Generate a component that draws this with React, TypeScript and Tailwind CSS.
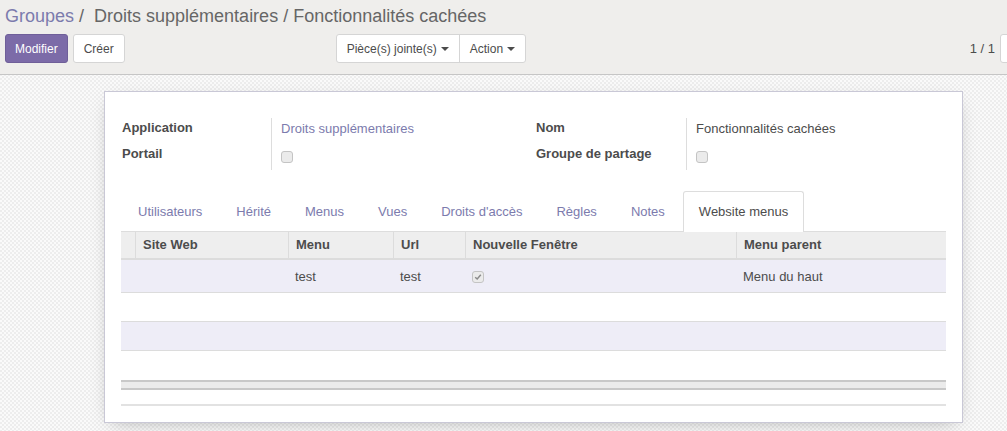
const Caret = () => (
  <span className="ml-[4px] inline-block h-0 w-0 border-x-[4px] border-t-[4px] border-x-transparent border-t-[#4c4c4c] align-middle" />
)

const Check = ({ checked = false }: { checked?: boolean }) => (
  <span className="flex h-[12px] w-[12px] items-center justify-center rounded-[3px] border border-[#c4c4c4] bg-[#ebebeb]">
    {checked && (
      <svg viewBox="0 0 10 10" className="h-[8px] w-[8px]">
        <path d="M1.5 5.2 L4 7.5 L8.5 2.2" fill="none" stroke="#8a8a8a" strokeWidth="1.8" />
      </svg>
    )}
  </span>
)

const tabs = ['Utilisateurs', 'Hérité', 'Menus', 'Vues', "Droits d'accès", 'Règles', 'Notes']

const cols = [
  { label: '', w: 'w-[14px]' },
  { label: 'Site Web', w: 'w-[153px]' },
  { label: 'Menu', w: 'w-[105px]' },
  { label: 'Url', w: 'w-[72px]' },
  { label: 'Nouvelle Fenêtre', w: 'w-[271px]' },
  { label: 'Menu parent', w: 'flex-1' },
]

const App = () => {
  return (
    <div className="min-h-[431px] overflow-hidden bg-[#f4f4f4] bg-[repeating-conic-gradient(#ededed_0_25%,#fafafa_0_50%)] bg-[length:4px_4px] font-['Liberation_Sans',Arial,sans-serif] text-[13px] text-[#4c4c4c]">
      {/* control panel */}
      <div className="h-[75px] border-b border-[#c6c6c6] bg-[#efeeec] px-[5px]">
        <div className="pt-[5px] text-[18px] leading-[22px]">
          <span className="text-[#7c7bad]">Groupes</span>
          <span className="text-[#666]"> / &nbsp;Droits supplémentaires / Fonctionnalités cachées</span>
        </div>
        <div className="mt-[7px] flex h-[29px] items-center text-[12px]">
          <button className="h-[29px] rounded-[3px] border border-[#6f5f99] bg-[#7c6ba8] px-[9px] text-white">Modifier</button>
          <button className="ml-[5px] h-[29px] rounded-[3px] border border-[#d5d5d5] bg-white px-[10px] text-[#4c4c4c]">Créer</button>
          <div className="ml-[211px] flex h-[29px] rounded-[3px] border border-[#d5d5d5] bg-white">
            <button className="flex items-center px-[10px]">Pièce(s) jointe(s)<Caret /></button>
            <button className="flex items-center border-l border-[#d5d5d5] px-[10px]">Action<Caret /></button>
          </div>
          <div className="ml-auto mr-[-58px] flex items-center">
            <span className="text-[13px] text-[#4c4c4c]">1 / 1</span>
            <div className="ml-[5px] h-[29px] w-[60px] rounded-[3px] border border-[#d5d5d5] bg-white" />
          </div>
        </div>
      </div>

      {/* form sheet */}
      <div className="ml-[104px] mt-[16px] w-[859px] border border-[#c9c8d6] bg-white px-[16px] pb-[16px] pt-[26px] shadow-[0_5px_18px_-8px_rgba(0,0,0,0.35)]">
        <div className="flex">
          <div className="flex w-[415px]">
            <div className="w-[150px] pl-[1px] font-bold">
              <div className="h-[26px] leading-[20px]">Application</div>
              <div className="h-[26px] leading-[20px]">Portail</div>
            </div>
            <div className="border-l border-[#ddd] pl-[9px]">
              <div className="h-[26px] pt-[1px] leading-[20px] text-[#7c7bad]">Droits supplémentaires</div>
              <div className="flex h-[26px] items-center"><Check /></div>
            </div>
          </div>
          <div className="flex">
            <div className="w-[150px] font-bold">
              <div className="h-[26px] leading-[20px]">Nom</div>
              <div className="h-[26px] leading-[20px]">Groupe de partage</div>
            </div>
            <div className="border-l border-[#ddd] pl-[9px]">
              <div className="h-[26px] pt-[1px] leading-[20px]">Fonctionnalités cachées</div>
              <div className="flex h-[26px] items-center"><Check /></div>
            </div>
          </div>
        </div>

        {/* tabs */}
        <div className="mt-[21px] flex">
          {tabs.map((t) => (
            <div key={t} className="mr-[2px] border border-transparent px-[15px] pb-[9px] pt-[10px] leading-[19px] text-[#7c7bad] first:pl-[16px]">
              {t}
            </div>
          ))}
          <div className="mb-[-1px] rounded-t-[3px] border border-b-0 border-[#ddd] bg-white px-[15px] pb-[11px] pt-[10px] leading-[19px] text-[#4c4c4c]">
            Website menus
          </div>
        </div>

        {/* table */}
        <div className="border-t border-[#ddd]">
          <div className="flex h-[28px] border-b-2 border-[#dcdcdc] bg-[#eeeeee] font-bold">
            {cols.map((c, i) => (
              <div key={i} className={`${c.w} flex items-center px-[7px] ${i > 0 ? 'border-l border-[#dcdcdc]' : ''}`}>
                {c.label}
              </div>
            ))}
          </div>
          <div className="flex h-[33px] items-center border-b border-[#dcdcdc] bg-[#eeedf7] pt-[2px]">
            <div className="w-[14px]" />
            <div className="w-[153px]" />
            <div className="w-[105px] px-[7px]">test</div>
            <div className="w-[72px] px-[7px]">test</div>
            <div className="w-[271px] px-[7px]"><Check checked /></div>
            <div className="flex-1 px-[7px]">Menu du haut</div>
          </div>
          <div className="h-[29px] border-b border-[#dcdcdc]" />
          <div className="h-[29px] border-b border-[#dcdcdc] bg-[#eeedf7]" />
          <div className="h-[29px]" />
          <div className="h-[10px] border-y-2 border-[#c8c8c8] bg-[#ebebeb]" />
        </div>
        <div className="mt-[14px] border-b-2 border-[#e2e2e2]" />
      </div>
    </div>
  )
}

export default App
